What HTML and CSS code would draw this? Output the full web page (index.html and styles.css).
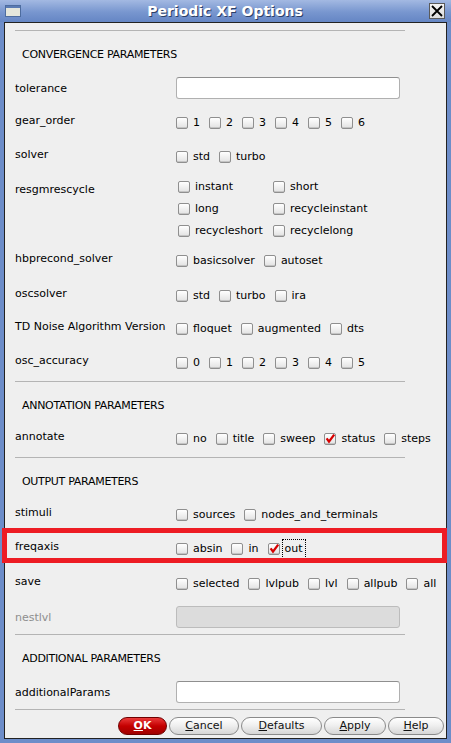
FILE: index.html
```html
<!DOCTYPE html>
<html>
<head>
<meta charset="utf-8">
<title>Periodic XF Options</title>
<link rel="stylesheet" href="styles.css">
</head>
<body>
<div class="window">
  <div class="titlebar">
    <svg class="win-icon" width="16" height="12" viewBox="0 0 16 12">
      <rect x="0.5" y="0.5" width="15" height="11" fill="#e4e6dc" stroke="#4d6c9f"/>
      <rect x="1" y="1" width="14" height="2" fill="#5a7bb3"/>
    </svg>
    <div class="title">Periodic XF Options</div>
    <div class="close">
      <svg width="14" height="14" viewBox="0 0 14 14"><path d="M2 2 L12 12 M12 2 L2 12" stroke="#000" stroke-width="1.8" fill="none"/></svg>
    </div>
  </div>
  <div class="body">
    <div class="panel">
      <div class="sep top"></div>
      <div class="section">CONVERGENCE PARAMETERS</div>
      <div class="field"><span class="label">tolerance</span><span class="entry"></span></div>
      <div class="row tight"><span class="label">gear_order</span>
        <div class="opts">
          <span class="opt"><span class="cb"></span>1</span>
          <span class="opt"><span class="cb"></span>2</span>
          <span class="opt"><span class="cb"></span>3</span>
          <span class="opt"><span class="cb"></span>4</span>
          <span class="opt"><span class="cb"></span>5</span>
          <span class="opt"><span class="cb"></span>6</span>
        </div>
      </div>
      <div class="row"><span class="label">solver</span>
        <div class="opts">
          <span class="opt"><span class="cb"></span>std</span>
          <span class="opt"><span class="cb"></span>turbo</span>
        </div>
      </div>
      <div class="row grid-row"><span class="label">resgmrescycle</span>
        <div class="opts-grid">
          <span class="opt"><span class="cb"></span>instant</span>
          <span class="opt"><span class="cb"></span>short</span>
          <span class="opt"><span class="cb"></span>long</span>
          <span class="opt"><span class="cb"></span>recycleinstant</span>
          <span class="opt"><span class="cb"></span>recycleshort</span>
          <span class="opt"><span class="cb"></span>recyclelong</span>
        </div>
      </div>
      <div class="row after-grid"><span class="label">hbprecond_solver</span>
        <div class="opts">
          <span class="opt"><span class="cb"></span>basicsolver</span>
          <span class="opt"><span class="cb"></span>autoset</span>
        </div>
      </div>
      <div class="row loose"><span class="label">oscsolver</span>
        <div class="opts">
          <span class="opt"><span class="cb"></span>std</span>
          <span class="opt"><span class="cb"></span>turbo</span>
          <span class="opt"><span class="cb"></span>ira</span>
        </div>
      </div>
      <div class="row snug"><span class="label">TD Noise Algorithm Version</span>
        <div class="opts">
          <span class="opt"><span class="cb"></span>floquet</span>
          <span class="opt"><span class="cb"></span>augmented</span>
          <span class="opt"><span class="cb"></span>dts</span>
        </div>
      </div>
      <div class="row"><span class="label">osc_accuracy</span>
        <div class="opts">
          <span class="opt"><span class="cb"></span>0</span>
          <span class="opt"><span class="cb"></span>1</span>
          <span class="opt"><span class="cb"></span>2</span>
          <span class="opt"><span class="cb"></span>3</span>
          <span class="opt"><span class="cb"></span>4</span>
          <span class="opt"><span class="cb"></span>5</span>
        </div>
      </div>
      <div class="sep"></div>
      <div class="section">ANNOTATION PARAMETERS</div>
      <div class="row"><span class="label">annotate</span>
        <div class="opts">
          <span class="opt"><span class="cb"></span>no</span>
          <span class="opt"><span class="cb"></span>title</span>
          <span class="opt"><span class="cb"></span>sweep</span>
          <span class="opt"><span class="cb checked"><svg width="12" height="12" viewBox="0 0 12 12"><path d="M2.6 5.4 L5 8.6 L10.2 1.6" stroke="#d60000" stroke-width="2.3" fill="none"/></svg></span>status</span>
          <span class="opt"><span class="cb"></span>steps</span>
        </div>
      </div>
      <div class="sep"></div>
      <div class="section">OUTPUT PARAMETERS</div>
      <div class="row"><span class="label">stimuli</span>
        <div class="opts">
          <span class="opt"><span class="cb"></span>sources</span>
          <span class="opt"><span class="cb"></span>nodes_and_terminals</span>
        </div>
      </div>
      <div class="row"><span class="label">freqaxis</span>
        <div class="opts">
          <span class="opt"><span class="cb"></span>absin</span>
          <span class="opt"><span class="cb"></span>in</span>
          <span class="opt"><span class="cb checked"><svg width="12" height="12" viewBox="0 0 12 12"><path d="M2.6 5.4 L5 8.6 L10.2 1.6" stroke="#d60000" stroke-width="2.3" fill="none"/></svg></span><span class="focus">out</span></span>
        </div>
      </div>
      <div class="row loose"><span class="label">save</span>
        <div class="opts">
          <span class="opt"><span class="cb"></span>selected</span>
          <span class="opt"><span class="cb"></span>lvlpub</span>
          <span class="opt"><span class="cb"></span>lvl</span>
          <span class="opt"><span class="cb"></span>allpub</span>
          <span class="opt"><span class="cb"></span>all</span>
        </div>
      </div>
      <div class="field after-row"><span class="label disabled">nestlvl</span><span class="entry off"></span></div>
      <div class="sep after-field"></div>
      <div class="section">ADDITIONAL PARAMETERS</div>
      <div class="field"><span class="label">additionalParams</span><span class="entry"></span></div>
      <div class="sep after-field"></div>
      <div class="buttons">
        <span class="btn ok"><u>O</u>K</span>
        <span class="btn cancel"><u>C</u>ancel</span>
        <span class="btn defaults"><u>D</u>efaults</span>
        <span class="btn apply"><u>A</u>pply</span>
        <span class="btn help"><u>H</u>elp</span>
      </div>
    </div>
  </div>
  <div class="highlight"></div>
</div>
</body>
</html>
```
FILE: styles.css
```css
* { box-sizing: border-box; }
html, body { margin: 0; padding: 0; }
body {
  width: 451px;
  height: 743px;
  overflow: hidden;
  font-family: "DejaVu Sans", "Liberation Sans", sans-serif;
  font-size: 11px;
  color: #000;
  background: #6d8dc9;
}
.window {
  position: relative;
  width: 451px;
  height: 743px;
  display: flex;
  flex-direction: column;
  background: #6d8dc9;
}
.titlebar {
  height: 22px;
  flex: none;
  display: grid;
  grid-template-columns: 5px 16px 1fr 16px 6px;
  align-items: center;
  background: linear-gradient(#a3b9e2, #7896cf 55%, #6586c4);
}
.win-icon { grid-column: 2; display: block; }
.title {
  grid-column: 3;
  text-align: center;
  color: #fff;
  font-weight: bold;
  font-size: 14px;
  line-height: 22px;
  text-shadow: 1px 1px 0 #2c3f66;
}
.close {
  grid-column: 4;
  width: 16px;
  height: 16px;
  background: linear-gradient(#f4f4f4, #dcdcdc);
  border: 1px solid #5a5a5a;
  display: flex;
  align-items: center;
  justify-content: center;
}
.close svg { display: block; }
.body {
  flex: 1;
  padding: 0 4px 4px;
  display: flex;
}
.panel {
  flex: 1;
  background: #efefef;
  border: 1px solid #222;
  padding: 0 0 2px 10px;
  display: flex;
  flex-direction: column;
}
.sep {
  width: 390px;
  height: 1px;
  background: #b4b4b4;
  margin-top: 11px;
  flex: none;
}
.sep.top { margin-top: 7px; }
.sep.after-field { margin-top: 6px; }
.section {
  margin-top: 16px;
  padding-left: 7px;
  padding-top: 2px;
  line-height: 12px;
  letter-spacing: -0.3px;
}
.label {
  width: 161px;
  flex: none;
  padding-top: 2px;
  line-height: 12px;
  white-space: nowrap;
}
.label.disabled { color: #8e8e8e; }
.field {
  display: flex;
  align-items: center;
  height: 22px;
  margin-top: 16px;
}
.field.after-row { margin-top: 15px; }
.entry {
  display: block;
  width: 224px;
  height: 22px;
  background: #fff;
  border: 1px solid #b0b0b0;
  border-top-color: #8f8f8f;
  border-radius: 3px;
}
.entry.off { background: #dcdcdc; border-color: #bcbcbc; }
.row {
  display: flex;
  align-items: flex-start;
  margin-top: 17px;
}
.row.tight { margin-top: 14px; }
.row.loose { margin-top: 18px; }
.row.snug { margin-top: 16px; }
.row.after-grid { margin-top: 9px; }
.row.grid-row { margin-top: 12px; }
.row.grid-row .label { margin-top: 6px; }
.opts {
  display: flex;
  gap: 9px;
  margin-top: 3px;
  line-height: 14px;
  height: 14px;
  align-items: center;
  white-space: nowrap;
}
.opts-grid {
  display: grid;
  grid-template-columns: 95px auto;
  grid-auto-rows: 22px;
  align-items: center;
  margin-left: 2px;
  line-height: 14px;
  white-space: nowrap;
}
.opt {
  display: flex;
  align-items: center;
  gap: 5px;
}
.cb {
  width: 12px;
  height: 12px;
  flex: none;
  border: 1px solid #8f8f8f;
  border-radius: 2px;
  background: linear-gradient(#ffffff, #e2e2e2);
  box-shadow: inset 0 -1px 0 #c4c4c4;
  position: relative;
}
.cb.checked svg {
  position: absolute;
  left: -1px;
  top: -1px;
}
.focus {
  margin: -3px 0 -3px -3px;
  padding: 2px;
  border: 1px dotted #000;
  line-height: 14px;
}
.buttons {
  display: flex;
  justify-content: flex-end;
  gap: 2px;
  margin-top: 7px;
  padding-right: 2px;
}
.btn {
  height: 18px;
  border-radius: 9px;
  border: 1px solid #8a8a8a;
  background: linear-gradient(#ffffff, #f0f0f0 45%, #d6d6d6);
  display: flex;
  align-items: center;
  justify-content: center;
  line-height: 14px;
  color: #111;
}
.btn u { text-underline-offset: 1px; }
.btn.ok {
  width: 49px;
  background: linear-gradient(#ea3a3a, #c40000 50%, #a00000);
  border-color: #6e0000;
  color: #fff;
  font-weight: bold;
}
.btn.cancel { width: 70px; }
.btn.defaults { width: 81px; }
.btn.apply { width: 62px; }
.btn.help { width: 56px; }
.highlight {
  position: absolute;
  left: 2px;
  top: 528px;
  width: 445px;
  height: 35px;
  border: 5px solid #ed1c24;
  pointer-events: none;
}
```
